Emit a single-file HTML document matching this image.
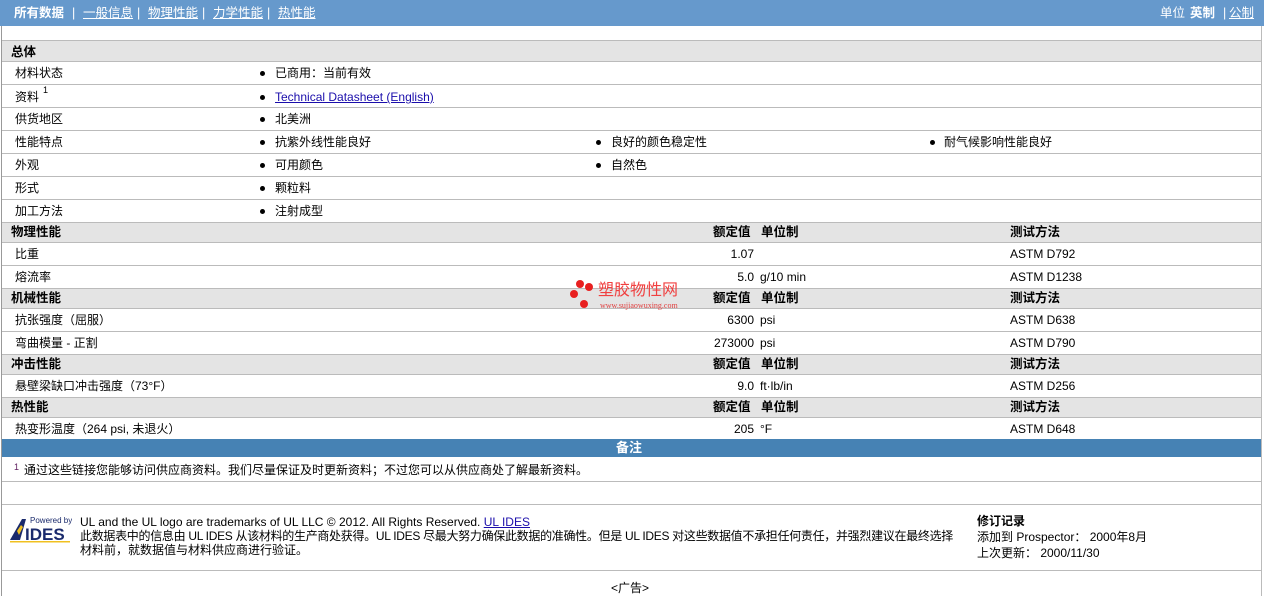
<!DOCTYPE html>
<html><head><meta charset="utf-8"><style>
*{margin:0;padding:0;box-sizing:border-box}
body{width:1264px;height:592px;overflow:hidden;background:#fff;font-family:"Liberation Sans","Noto Sans CJK SC",sans-serif;font-size:12px;line-height:14px;color:#000;position:relative}
.a{position:absolute;white-space:nowrap}
.top{position:absolute;left:0;top:0;width:1264px;height:26px;background:#6699cc;color:#fff;font-size:12.5px}
.top span{position:absolute;top:6px;line-height:14px}
.top u{text-decoration:underline}
.frame{position:absolute;left:1px;top:26px;width:1261px;height:570px;border-left:1px solid #999;border-right:1px solid #bbb}
.row{position:absolute;left:2px;width:1259px;border-bottom:1px solid #bbb}
.hd{background:#e4e4e4;font-weight:bold;font-size:12.5px}
.t{position:absolute;white-space:nowrap;line-height:14px}
.b{position:absolute;width:5px;height:5px;border-radius:50%;background:#000}
a{color:#1a0dab}
sup{position:absolute;top:-4px;font-size:9px;line-height:9px}
</style></head><body>
<div class="top">
<span style="left:14px;font-weight:bold">所有数据</span>
<span style="left:72px">|</span><span style="left:83px"><u>一般信息</u></span>
<span style="left:137px">|</span><span style="left:148px"><u>物理性能</u></span>
<span style="left:202px">|</span><span style="left:213px"><u>力学性能</u></span>
<span style="left:267px">|</span><span style="left:278px"><u>热性能</u></span>
<span style="left:1160px">单位</span><span style="left:1190px;font-weight:bold">英制</span>
<span style="left:1223px">|</span><span style="left:1229px"><u>公制</u></span>
</div>
<div class="frame"></div>
<div class="row" style="top:40px;height:1px;border-bottom:1px solid #bbb"></div>

<div class="row hd" style="top:41px;height:21px"><span class="t" style="left:9px;top:4px">总体</span></div>
<div class="row" style="top:62px;height:23px"><span class="t" style="left:13px;top:4px">材料状态</span><i class="b" style="left:258px;top:9px"></i><span class="t" style="left:273px;top:4px">已商用：当前有效</span></div>
<div class="row" style="top:85px;height:23px"><span class="t" style="left:13px;top:5px">资料 <sup style="left:28px">1</sup></span><i class="b" style="left:258px;top:10px"></i><span class="t" style="left:273px;top:5px"><a style="text-decoration:underline">Technical Datasheet (English)</a></span></div>
<div class="row" style="top:108px;height:23px"><span class="t" style="left:13px;top:4px">供货地区</span><i class="b" style="left:258px;top:9px"></i><span class="t" style="left:273px;top:4px">北美洲</span></div>
<div class="row" style="top:131px;height:23px"><span class="t" style="left:13px;top:4px">性能特点</span><i class="b" style="left:258px;top:9px"></i><span class="t" style="left:273px;top:4px">抗紫外线性能良好</span><i class="b" style="left:594px;top:9px"></i><span class="t" style="left:609px;top:4px">良好的颜色稳定性</span><i class="b" style="left:928px;top:9px"></i><span class="t" style="left:942px;top:4px">耐气候影响性能良好</span></div>
<div class="row" style="top:154px;height:23px"><span class="t" style="left:13px;top:4px">外观</span><i class="b" style="left:258px;top:9px"></i><span class="t" style="left:273px;top:4px">可用颜色</span><i class="b" style="left:594px;top:9px"></i><span class="t" style="left:609px;top:4px">自然色</span></div>
<div class="row" style="top:177px;height:23px"><span class="t" style="left:13px;top:4px">形式</span><i class="b" style="left:258px;top:9px"></i><span class="t" style="left:273px;top:4px">颗粒料</span></div>
<div class="row" style="top:200px;height:23px"><span class="t" style="left:13px;top:4px">加工方法</span><i class="b" style="left:258px;top:9px"></i><span class="t" style="left:273px;top:4px">注射成型</span></div>

<div class="row hd" style="top:223px;height:20px"><span class="t" style="left:9px;top:2px">物理性能</span><span class="t" style="left:711px;top:2px">额定值</span><span class="t" style="left:759px;top:2px">单位制</span><span class="t" style="left:1008px;top:2px">测试方法</span></div>
<div class="row" style="top:243px;height:23px"><span class="t" style="left:13px;top:4px">比重</span><span class="t" style="right:507px;top:4px">1.07</span><span class="t" style="left:1008px;top:4px">ASTM D792</span></div>
<div class="row" style="top:266px;height:23px"><span class="t" style="left:13px;top:4px">熔流率</span><span class="t" style="right:507px;top:4px">5.0</span><span class="t" style="left:758px;top:4px">g/10 min</span><span class="t" style="left:1008px;top:4px">ASTM D1238</span></div>

<div class="row hd" style="top:289px;height:20px"><span class="t" style="left:9px;top:2px">机械性能</span><span class="t" style="left:711px;top:2px">额定值</span><span class="t" style="left:759px;top:2px">单位制</span><span class="t" style="left:1008px;top:2px">测试方法</span></div>
<div class="row" style="top:309px;height:23px"><span class="t" style="left:13px;top:4px">抗张强度（屈服）</span><span class="t" style="right:507px;top:4px">6300</span><span class="t" style="left:758px;top:4px">psi</span><span class="t" style="left:1008px;top:4px">ASTM D638</span></div>
<div class="row" style="top:332px;height:23px"><span class="t" style="left:13px;top:4px">弯曲模量 - 正割</span><span class="t" style="right:507px;top:4px">273000</span><span class="t" style="left:758px;top:4px">psi</span><span class="t" style="left:1008px;top:4px">ASTM D790</span></div>

<div class="row hd" style="top:355px;height:20px"><span class="t" style="left:9px;top:2px">冲击性能</span><span class="t" style="left:711px;top:2px">额定值</span><span class="t" style="left:759px;top:2px">单位制</span><span class="t" style="left:1008px;top:2px">测试方法</span></div>
<div class="row" style="top:375px;height:23px"><span class="t" style="left:13px;top:4px">悬壁梁缺口冲击强度（73°F）</span><span class="t" style="right:507px;top:4px">9.0</span><span class="t" style="left:758px;top:4px">ft·lb/in</span><span class="t" style="left:1008px;top:4px">ASTM D256</span></div>

<div class="row hd" style="top:398px;height:20px"><span class="t" style="left:9px;top:2px">热性能</span><span class="t" style="left:711px;top:2px">额定值</span><span class="t" style="left:759px;top:2px">单位制</span><span class="t" style="left:1008px;top:2px">测试方法</span></div>
<div class="row" style="top:418px;height:21px;border-bottom:none"><span class="t" style="left:13px;top:4px">热变形温度（264 psi, 未退火）</span><span class="t" style="right:507px;top:4px">205</span><span class="t" style="left:758px;top:4px">°F</span><span class="t" style="left:1008px;top:4px">ASTM D648</span></div>

<div class="row" style="top:439px;height:18px;background:#4682b4;border:none;color:#fff;font-weight:bold;font-size:13px"><span class="t" style="left:614px;top:2px">备注</span></div>
<div class="row" style="top:457px;height:25px"><span class="t" style="left:12px;top:3px;color:#602060;font-size:9px">1</span><span class="t" style="left:22px;top:6px">通过这些链接您能够访问供应商资料。我们尽量保证及时更新资料；不过您可以从供应商处了解最新资料。</span></div>
<div class="row" style="top:482px;height:23px"></div>

<div class="row" style="top:505px;height:66px">
<svg class="t" style="left:6px;top:10px" width="64" height="28" viewBox="0 0 64 28"><polygon points="2,25 14,4 18,4 12,25" fill="#1a2a6c"/><polygon points="9,16 13,10 15,12 11,20" fill="#f0c020"/><text x="22" y="8" font-size="8" fill="#1a2a6c" font-family="Liberation Sans">Powered by</text><text x="17" y="25" font-size="17" font-weight="bold" fill="#1a2a6c" font-family="Liberation Sans">IDES</text><rect x="2" y="26" width="60" height="1.5" fill="#f0c020"/></svg>
<span class="t" style="left:78px;top:10px">UL and the UL logo are trademarks of UL LLC © 2012. All Rights Reserved. <a style="text-decoration:underline">UL IDES</a></span>
<span class="t" style="left:78px;top:24px;letter-spacing:-0.3px">此数据表中的信息由 UL IDES 从该材料的生产商处获得。UL IDES 尽最大努力确保此数据的准确性。但是 UL IDES 对这些数据值不承担任何责任，并强烈建议在最终选择</span>
<span class="t" style="left:78px;top:38px">材料前，就数据值与材料供应商进行验证。</span>
<span class="t" style="left:975px;top:9px;font-weight:bold">修订记录</span>
<span class="t" style="left:975px;top:25px">添加到 Prospector： 2000年8月</span>
<span class="t" style="left:975px;top:41px">上次更新： 2000/11/30</span>
</div>
<span class="a" style="left:611px;top:581px">&lt;广告&gt;</span>

<div class="a" style="left:570px;top:280px;width:130px;height:32px">
<i class="b" style="left:6px;top:0;width:8px;height:8px;background:#e82020"></i>
<i class="b" style="left:15px;top:3px;width:8px;height:8px;background:#e82020"></i>
<i class="b" style="left:0;top:10px;width:8px;height:8px;background:#e82020"></i>
<i class="b" style="left:10px;top:20px;width:8px;height:8px;background:#e82020"></i>
<span class="t" style="left:28px;top:2px;color:#f04040;font-size:16px;line-height:18px">塑胶物性网</span>
<span class="t" style="left:30px;top:21px;color:#e04040;font-size:8px;line-height:10px;font-family:'Liberation Serif',serif">www.sujiaowuxing.com</span>
</div>
</body></html>
